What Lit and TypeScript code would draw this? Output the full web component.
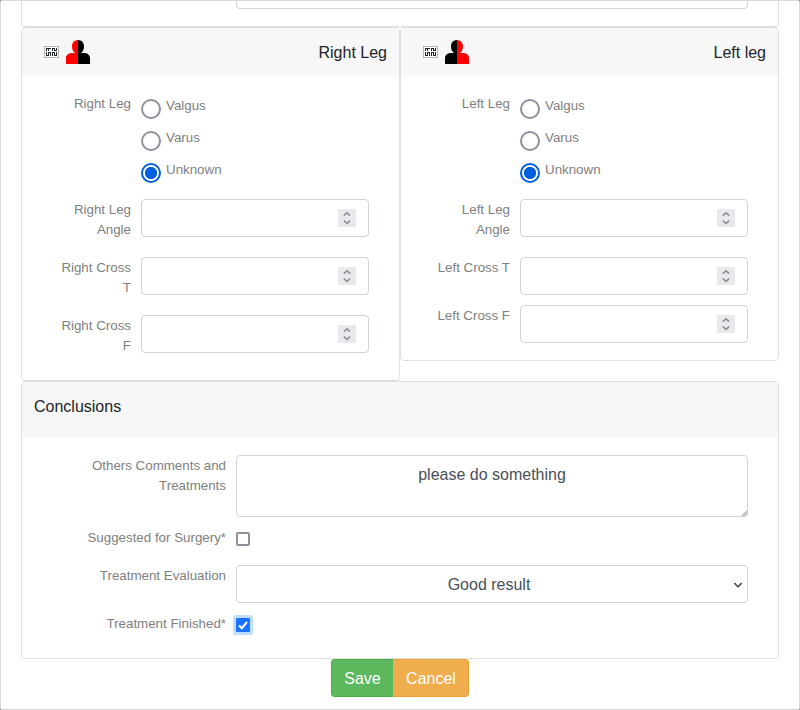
import { LitElement, html, css, svg } from "lit";
import { customElement, property } from "lit/decorators.js";

const LEGS = [
  {
    title: "Right Leg", first: "Right Leg", mirrored: false,
    fields: ["Right Leg Angle", "Right Cross T", "Right Cross F"],
  },
  {
    title: "Left leg", first: "Left Leg", mirrored: true,
    fields: ["Left Leg Angle", "Left Cross T", "Left Cross F"],
  },
];

@customElement("leg-card")
class LegCard extends LitElement {
  @property({ attribute: false }) leg!: (typeof LEGS)[number];

  static styles = css`
    :host { display: block; box-sizing: border-box; border: 1px solid #dfdfdf; border-radius: 4px; background: #fff; }
    * { box-sizing: border-box; }
    .head { display: flex; align-items: center; height: 48px; background: #f7f7f7; border-radius: 3px 3px 0 0; padding: 0 12px 0 22px; color: #212529; font-size: 16px; }
    .box { flex: none; width: 15px; height: 12px; }
    .person { flex: none; width: 24px; height: 24px; margin-left: 7px; }
    .title { margin-left: auto; line-height: 24px; padding-top: 1px; }
    .body { padding: 18px 30px 17px; }
    .row { display: flex; align-items: flex-start; margin-bottom: 10px; }
    .row:last-child { margin-bottom: 0; }
    .label { width: 89px; flex: none; padding: 0 10px 0 0; text-align: right; color: #808080; font-size: 13.333px; line-height: 20px; }
    .field-label { padding: 1px 10px 7px 3px; }
    .radios { display: flex; flex-direction: column; gap: 12px; padding-top: 5px; margin-bottom: 6px; }
    .radio { display: flex; height: 20px; color: #808080; font-size: 13.333px; line-height: 20px; }
    .dot { width: 20px; height: 20px; border: 2px solid #8f8f9d; border-radius: 50%; margin-right: 5px; }
    .dot.on { border-color: #0060df; background: radial-gradient(circle, #0060df 5.7px, #fff 6.4px); }
    .text { margin-top: -3px; }
    .input { width: 228px; height: 38px; border: 1px solid #ced4da; border-radius: 4px; display: flex; align-items: center; justify-content: flex-end; padding-right: 12px; }
    .spin { width: 18px; height: 18px; background: #e9e9ed; }
  `;

  person(mirrored: boolean) {
    const a = mirrored ? "#000" : "#f00";
    const b = mirrored ? "#f00" : "#000";
    return html`<svg class="person" viewBox="0 0 24 24">
      ${svg`
        <path fill=${a} d="M12 0C8.3 0 6 2.8 6 6.4C6 9.3 7.2 11.9 9.2 13H6.5C2.4 13 0 15 0 18.2V24H12Z"/>
        <path fill=${b} d="M12 0C15.7 0 18 2.8 18 6.4C18 9.3 16.8 11.9 14.8 13H17.5C21.6 13 24 15 24 18.2V24H12Z"/>`}
    </svg>`;
  }

  render() {
    const { title, first, mirrored, fields } = this.leg;
    return html`
      <div class="head">
        <svg class="box" viewBox="0 0 15 12" shape-rendering="crispEdges">
          <rect x=".5" y=".5" width="14" height="11" fill="#fff" stroke="#b4b5b6"/>
          <path fill="none" stroke="#212529" d="M2 2.5H7M2.5 2V5M4.5 2V5M8 4.5H9M8.5 2V5M8 2.5H11M10.5 2V5M10 4.5H13M12.5 2V5M2.5 6V10M2 9.5H5M4.5 6V10M4 6.5H7M6.5 6V10M8.5 6V10M8 6.5H11M10.5 6V10M10 9.5H13M12.5 6V10"/>
        </svg>
        ${this.person(mirrored)}
        <span class="title">${title}</span>
      </div>
      <div class="body">
        <div class="row">
          <div class="label">${first}</div>
          <div class="radios">
            ${["Valgus", "Varus", "Unknown"].map((name) => html`
              <div class="radio"><span class="dot ${name === "Unknown" ? "on" : ""}"></span><span class="text">${name}</span></div>`)}
          </div>
        </div>
        ${fields.map((name) => html`
          <div class="row">
            <div class="label field-label">${name}</div>
            <div class="input">
              <svg class="spin" viewBox="0 0 18 18"><path d="M5.8 6.6L9 3.8L12.2 6.6M5.8 11.6L9 14.4L12.2 11.6" fill="none" stroke="#8f8f9d" stroke-width="1.6"/></svg>
            </div>
          </div>`)}
      </div>`;
  }
}

@customElement("app-root")
class AppRoot extends LitElement {
  static styles = css`
    :host { display: block; font-family: "Liberation Sans", Arial, sans-serif; background: #777; }
    * { box-sizing: border-box; }
    .modal { height: 710px; background: #fff; border: 1px solid #d9d9d9; border-radius: 2px; padding: 0 20px; overflow: hidden; }
    .upper { height: 26px; border: 1px solid #dfdfdf; border-top: 0; border-radius: 0 0 4px 4px; padding-left: 214px; }
    .upper-input { width: 512px; height: 8px; border: 1px solid #ced4da; border-top: 0; border-radius: 0 0 4px 4px; }
    .legs { display: grid; grid-template-columns: 379px 379px; align-items: start; }
    .card { height: 278px; border: 1px solid #dfdfdf; border-radius: 4px; }
    .head { height: 56px; padding: 13px 12px; background: #f7f7f7; border-radius: 3px 3px 0 0; font-size: 16px; line-height: 24px; color: #212529; }
    .body { padding: 17px 30px 0 0; }
    .row { display: flex; margin-bottom: 10px; }
    .label { width: 214px; flex: none; text-align: right; padding: 1px 10px 0 60px; color: #808080; font-size: 13.333px; line-height: 20px; }
    .area, .select { width: 512px; border: 1px solid #ced4da; border-radius: 4px; color: #495057; font-size: 16px; line-height: 24px; text-align: center; }
    .area { position: relative; height: 62px; padding: 7px 12px; }
    .grip { position: absolute; right: 0; bottom: 0; width: 6px; height: 6px; }
    .select { display: flex; align-items: center; height: 38px; padding: 1px 4px 0 12px; }
    .value { flex: 1; padding-right: 4px; }
    .arrow { width: 10px; height: 8px; }
    .check { width: 14px; height: 14px; margin-top: 5px; border: 2px solid #8f8f9d; border-radius: 2px; }
    .check.on { border: 0; background: #1a73ff; box-shadow: 0 0 0 3px #bfdeff; border-radius: 1px; }
    .tick { display: block; width: 14px; height: 14px; }
    .surgery { height: 28px; }
    .buttons { display: flex; justify-content: center; }
    .btn { height: 38px; border: 1px solid; color: #fff; font-size: 16px; line-height: 24px; text-align: center; padding: 7px 0 0; }
    .save { width: 62px; background: #5cb85c; border-color: #4cae4c; border-right: 0; border-radius: 4px 0 0 4px; }
    .cancel { width: 76px; background: #f0ad4e; border-color: #eea236; border-left: 0; border-radius: 0 4px 4px 0; padding-left: 1px; }
  `;

  render() {
    return html`
      <div class="modal">
        <div class="upper"><div class="upper-input"></div></div>
        <div class="legs">${LEGS.map((leg) => html`<leg-card .leg=${leg}></leg-card>`)}</div>
        <div class="card">
          <div class="head">Conclusions</div>
          <div class="body">
            <div class="row">
              <div class="label">Others Comments and Treatments</div>
              <div class="area">please do something
                <svg class="grip" viewBox="0 0 7 7"><path d="M7 0V7H0Z" fill="#d0d0d0"/><path d="M1.5 6.5L6.5 1.5M4.5 6.5L6.5 4.5" stroke="#858585" stroke-dasharray="1 1"/></svg>
              </div>
            </div>
            <div class="row surgery">
              <div class="label">Suggested for Surgery*</div>
              <div class="check"></div>
            </div>
            <div class="row">
              <div class="label">Treatment Evaluation</div>
              <div class="select">
                <span class="value">Good result</span>
                <svg class="arrow" viewBox="0 0 10 8"><path d="M1.3 2L5 5.8L8.7 2" fill="none" stroke="#495057" stroke-width="1.7"/></svg>
              </div>
            </div>
            <div class="row">
              <div class="label">Treatment Finished*</div>
              <div class="check on"><svg class="tick" viewBox="0 0 14 14"><path d="M3 7.5L5.8 10.2L11 4" fill="none" stroke="#fff" stroke-width="2"/></svg></div>
            </div>
          </div>
        </div>
        <div class="buttons"><div class="btn save">Save</div><div class="btn cancel">Cancel</div></div>
      </div>`;
  }
}
